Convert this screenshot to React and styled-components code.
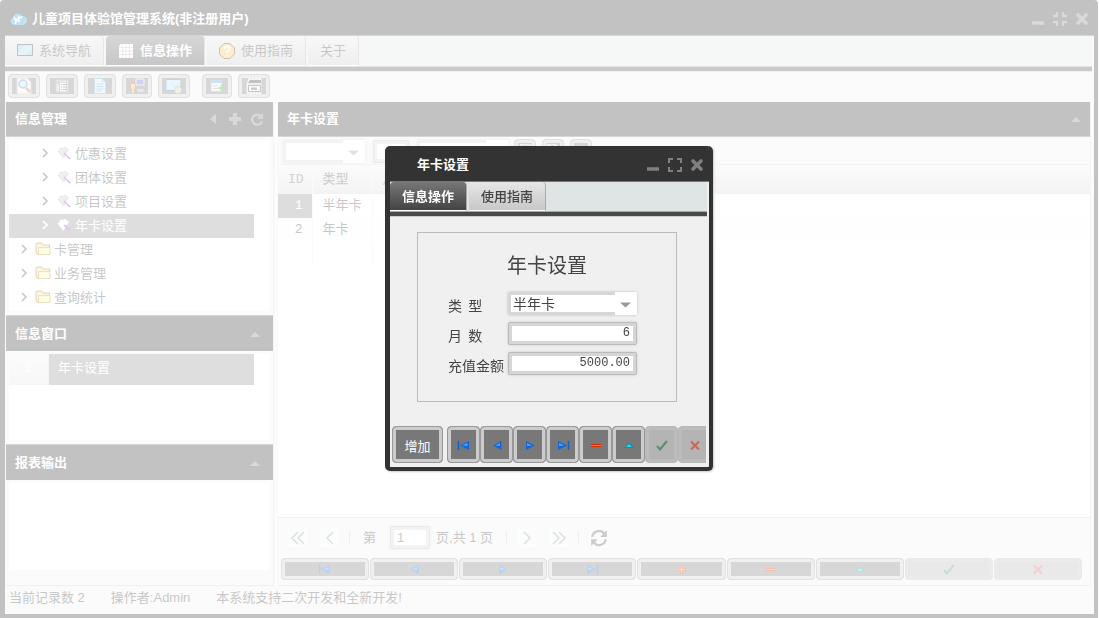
import React from 'react'
import styled, { createGlobalStyle, css } from 'styled-components'

const sans = `"Noto Sans CJK SC", "Liberation Sans", sans-serif`
const ui = `"Liberation Sans", "Noto Sans CJK SC", sans-serif`
const mono = `"Liberation Mono", "Noto Sans CJK SC", monospace`

const GlobalStyle = createGlobalStyle`
  * {
    box-sizing: border-box;
  }
  body {
    margin: 0;
    background: #f0f0f0;
    font: 13px/18px ${ui};
    color: #444;
  }
  button, input, select {
    margin: 0;
    font: inherit;
    color: inherit;
  }
`

// Window frame

const Frame = styled.div`
  display: flex;
  flex-direction: column;
  min-height: 100vh;
  margin-right: 1px;
  border: solid #333;
  border-width: 0 4px 4px 5px;
  border-radius: 4px 4px 0 0;
  background: #f0f0f0;
`

const TitleBar = styled.header`
  display: flex;
  align-items: center;
  height: 36px;
  padding: ${p => (p.$dialog ? '3px 4px 0 27px' : '3px 4px 0 5px')};
  border-bottom: 1px solid #777;
  background: #333;
`

const WindowTitle = styled.h1`
  flex: 1;
  margin: 0 0 0 ${p => (p.$dialog ? 0 : 5)}px;
  font: bold 13px/18px ${ui};
  color: #fff;
`

const Controls = styled.div`
  display: flex;
  gap: 6px;
`

const ControlButton = styled.button`
  display: flex;
  width: 16px;
  height: 16px;
  padding: 0;
  border: 0;
  background: none;
  color: #808080;
`

const TabStrip = styled.nav`
  display: flex;
  gap: 2px;
  height: ${p => (p.$dialog ? 30 : 31)}px;
  margin-right: 2px;
  background: #dfe5e4;
  border-bottom: 1px solid #aaa;
`

const Band = styled.div`
  height: 5px;
  margin-right: 2px;
  border-bottom: 1px solid #ccc;
  background: #4a4a4a;
`

const Tab = styled.button`
  display: flex;
  align-items: center;
  gap: 6px;
  padding: 0 12px;
  border: 0;
  border-right: 1px solid #aaa;
  border-bottom: 1px solid #fff;
  border-radius: 4px 4px 0 0;
  background: linear-gradient(#e6e6e6, #c8c8c8);
  white-space: nowrap;
  ${p => p.$dialog && css`
    padding-top: 2px;
    font-weight: 500;
  `}
  ${p => p.$active && css`
    background: linear-gradient(#777, #444);
    color: #fff;
    font-weight: bold;
  `}
`

// Toolbar

const Toolbar = styled.div`
  display: flex;
  align-items: flex-start;
  gap: 12px;
  height: 30px;
  padding: 2px 3px;
`

const ToolGroup = styled.div`
  display: flex;
  gap: 6px;
`

const key = css`
  display: flex;
  align-items: center;
  justify-content: center;
  border: 1px solid #999;
  border-radius: 4px;
  background: #787878;
  box-shadow: inset 0 0 0 3px #ccc;
`

const ToolButton = styled.button`
  ${key}
  width: ${p => (p.$narrow ? 30 : 32)}px;
  height: 24px;
  padding: 0;
  ${p => p.$small && css`
    width: 22px;
  `}
`

const NavButton = styled.button`
  ${key}
  flex: ${p => (p.$dialog ? '0 0 33px' : 1)};
  height: ${p => (p.$dialog ? 37 : 22)}px;
  padding: ${p => (p.$dialog ? 2 : 0)}px 0 0;
  ${p => p.$wide && css`
    flex-basis: 51px;
    padding-top: 5px;
    color: #fff;
    margin-right: 4px;
  `}
  &:disabled {
    border-color: #b8b8b8;
    background: #b4b4b4;
    box-shadow: inset 0 0 0 3px #bcbcbc;
  }
  &:disabled svg {
    opacity: 0.6;
  }
`

// Panels

const Main = styled.main`
  flex: 1;
  display: flex;
  gap: 4px;
  padding: 0 3px 0 1px;
`

const Sidebar = styled.aside`
  display: flex;
  flex-direction: column;
  width: 268px;
  border-right: 1px solid #ddd;
  border-bottom: 1px solid #ccc;
`

const Content = styled.section`
  flex: 1;
  min-width: 0;
  display: flex;
  flex-direction: column;
  border-right: 1px solid #ddd;
  border-bottom: 1px solid #ccc;
`

const PanelHead = styled.header`
  display: flex;
  align-items: center;
  gap: 6px;
  height: ${p => (p.$stacked ? 36 : 35)}px;
  padding: 0 ${p => (p.$stacked ? 12 : 8)}px 0 9px;
  border: solid #777;
  border-width: ${p => (p.$stacked ? '1px 0 0' : '0 0 1px')};
  background: #333;
`

const PanelTitle = styled.h2`
  flex: 1;
  margin: 0;
  font: bold 13px/18px ${ui};
  color: #fff;
`

const PanelBody = styled.div`
  display: flex;
  flex-direction: column;
  flex: ${p => (p.$grow ? 1 : 'none')};
  padding: 3px 4px ${p => (p.$grow ? 15 : 4)}px 3px;
`

const Well = styled.div`
  flex: 1;
  min-height: 86px;
  padding-right: 15px;
  background: #fff;
`

const Tree = styled.ul`
  margin: 0;
  padding: 2px 0 1px;
  list-style: none;
`

const TreeItem = styled.li`
  display: flex;
  align-items: center;
  gap: ${p => (p.$leaf ? 4 : 3)}px;
  height: 24px;
  padding-left: ${p => (p.$leaf ? 30 : 9)}px;
  ${p => p.$selected && css`
    background: #929292;
    color: #fff;
  `}
  > svg:first-child {
    margin-right: 2px;
  }
  > svg {
    margin-bottom: 3px;
  }
`

const OpenWindow = styled.button`
  display: flex;
  width: 100%;
  height: 31px;
  padding: 0;
  border: 0;
  background: #929292;
  color: #fff;
  line-height: 28px;
  text-align: left;
`

const OpenNumber = styled.span`
  width: 40px;
  height: 31px;
  margin-right: 9px;
  border-right: 1px solid #ddd;
  background: linear-gradient(#f4f4f4, #e4e4e4);
  text-align: center;
`

// Grid

const Filters = styled.div`
  display: flex;
  gap: 8px;
  height: 28px;
  padding: 3px 5px;
  border-bottom: 1px solid #ddd;
`

const FilterTools = styled.div`
  display: flex;
  gap: 6px;
  margin: -1px 0 0 -2px;
`

const GridArea = styled.div`
  flex: 1;
  background: #fff;
`

const Grid = styled.table`
  width: 100%;
  border-collapse: collapse;
  table-layout: fixed;
  font-family: ${mono};
  thead {
    background: linear-gradient(#f2f2f2, #d8d8d8);
    color: #666;
  }
  th {
    height: 29px;
    font-weight: 500;
  }
  td {
    height: 24px;
  }
  th, td {
    padding: 0 9px 0 10px;
    border-right: 1px solid #eee;
    text-align: left;
    white-space: nowrap;
  }
  th:last-child, td:last-child {
    border: 0;
  }
  td:first-child {
    text-align: right;
  }
  tbody tr:nth-child(even) td {
    background: #fafafa;
  }
  td.current {
    background: #8c8c8c;
    color: #fff;
  }
`

const Pager = styled.div`
  display: flex;
  align-items: center;
  gap: 9px;
  height: 41px;
  padding: 0 8px 1px;
  border-top: 1px solid #ccc;
`

const PagerButton = styled.button`
  display: flex;
  align-items: center;
  justify-content: center;
  width: 23px;
  height: 23px;
  padding: 0;
  border: 1px solid #e6e6e6;
  border-radius: 3px;
  background: #f2f4f4;
  color: ${p => (p.$strong ? '#555' : '#999')};
`

const Divider = styled.span`
  width: 1px;
  height: 14px;
  margin: 0 -1px;
  background: #ccc;
`

const PageLabel = styled.label`
  display: flex;
  align-items: center;
  gap: 14px;
  margin: 0 -3px 0 5px;
`

const PageTotal = styled.span`
  margin-right: 5px;
`

const NavBar = styled.div`
  display: flex;
  gap: ${p => (p.$dialog ? 0 : 1)}px;
  padding: ${p => (p.$dialog ? '0 0 4px' : '0 8px 5px 3px')};
  ${p => p.$dialog && css`
    margin: 24px 3px 0 2px;
    overflow: hidden;
  `}
`

const StatusBar = styled.footer`
  display: flex;
  gap: 26px;
  height: 28px;
  padding: 0 4px;
  line-height: 24px;
`

// Form fields

const TextInput = styled.input`
  width: ${p => p.$width}px;
  height: 23px;
  padding: 0 3px;
  border: 4px solid #d6d6d6;
  border-radius: 2px;
  outline: 1px solid #bbb;
  outline-offset: -1px;
  background: #fff;
  font: ${p => (p.$number ? `12px/15px ${mono}` : `13px/15px ${ui}`)};
  text-align: ${p => (p.$number ? 'right' : 'left')};
  box-shadow: 0 0 3px #ccc;
`

const SelectBox = styled.span`
  position: relative;
  display: flex;
  width: ${p => p.$width}px;
  height: 23px;
  border-radius: 2px;
  box-shadow: 0 0 3px #bbb;
  svg {
    position: absolute;
    right: 0;
    top: 0;
    width: 22px;
    height: 23px;
    background: #fff;
    pointer-events: none;
  }
`

const NativeSelect = styled.select`
  appearance: none;
  width: 100%;
  padding: 0 2px;
  border: 3px solid #d6d6d6;
  border-radius: 2px;
  background: #fff;
  font: 14px/16px ${sans};
`

// Dialog

const Mask = styled.div`
  position: fixed;
  inset: 0;
  display: grid;
  place-items: center;
  padding: 0 1px 2px 0;
  background: rgba(255, 255, 255, 0.7);
`

const Dialog = styled.section`
  width: 328px;
  border: solid #333;
  border-width: 0 4px 4px 5px;
  border-radius: 5px;
  background: #f0f0f0;
  overflow: hidden;
  box-shadow: 1px 1px 2px #ccc;
`

const Form = styled.form`
  margin: 15px 32px 0 27px;
  padding: 16px 30px 19px;
  border: 1px solid #bbb;
`

const FormTitle = styled.h2`
  margin: 0 0 11px;
  font: 20px/32px ${sans};
  text-align: center;
`

const Field = styled.div`
  display: flex;
  height: 30px;
  gap: 4px;
  label {
    width: 56px;
    font: 14px/27px ${sans};
    white-space: pre;
  }
  input, ${SelectBox} {
    flex: none;
  }
`

// Icons

const Svg = ({ size = 16, children, ...rest }) => (
  <svg width={size} height={size} viewBox="0 0 16 16" fill="none" aria-hidden="true" {...rest}>
    {children}
  </svg>
)

const navShapes = {
  first: (
    <>
      <path d="M2.500 4v9" stroke="#0b63d8" strokeWidth="1.500" />
      <path d="M13 4v9L4 8.500z" fill="#1066d8" />
      <path d="M11.500 6v3L6 8.500z" fill="#4aa4ff" />
    </>
  ),
  prev: (
    <>
      <path d="M12.500 4v9L4 8.500z" fill="#1066d8" />
      <path d="M11 6v3L6 8.500z" fill="#4aa4ff" />
    </>
  ),
  next: (
    <>
      <path d="M4 4v9l8.500-4.500z" fill="#1066d8" />
      <path d="M5 6v3l5.500-.5z" fill="#4aa4ff" />
    </>
  ),
  last: (
    <>
      <path d="M13.500 4v9" stroke="#0b63d8" strokeWidth="1.500" />
      <path d="M3 4v9l9-4.500z" fill="#1066d8" />
      <path d="M4 6v3l5.500-.5z" fill="#4aa4ff" />
    </>
  ),
  add: (
    <>
      <path d="M8.500 4v9M4 8.500h9" stroke="#d83808" strokeWidth="3" />
      <path d="M8.500 5v7M5 8.500h7" stroke="#ff8a50" />
    </>
  ),
  remove: (
    <>
      <path d="M3 8.500h10" stroke="#d42a00" strokeWidth="3" />
      <path d="M3 8.500h10" stroke="#ff7a3c" />
    </>
  ),
  edit: (
    <>
      <path d="M3 11h10.500L8 5.500z" fill="#0c90a8" />
      <path d="M5 10h6L8 7z" fill="#30d4e4" />
    </>
  ),
  save: <path d="M3 9l3 3.500L13 4" stroke="#157a3a" strokeWidth="2" />,
  cancel: <path d="M4 4.500l8 8M12 4.500l-8 8" stroke="#e0301a" strokeWidth="2" />,
}

const NavIcon = ({ name }) => <Svg>{navShapes[name]}</Svg>

const toolShapes = {
  search: (
    <>
      <path d="M1 0h10l4 4v12H1z" fill="#f4f4f4" stroke="#aaa" />
      <circle cx="7" cy="6" r="4" fill="#bfe6fb" stroke="#4a90c0" strokeWidth="1.500" />
      <path d="M10 10l4 4" stroke="#d8642a" strokeWidth="2.500" />
    </>
  ),
  list: (
    <>
      <path d="M2 2h12v12H2z" fill="#ccc" stroke="#999" />
      <path d="M2.500 3h3v3h-3z" fill="#5aa4dc" />
      <path d="M5.500 4h7v10h-7z" fill="#eee" stroke="#888" />
      <path d="M7 6.500h1M9 6.500h3M7 9h1M9 9h3M7 11.500h1M9 11.500h3" stroke="#555" />
    </>
  ),
  page: (
    <>
      <path d="M2.500.5h8l3 3v12h-11z" fill="#d4ecfa" stroke="#6aa6cc" />
      <path d="M10.500.5v3h3M4.500 6h7M4.500 8.500h7M4.500 11h7M4.500 13h5" stroke="#5f9cc4" />
    </>
  ),
  user: (
    <>
      <path d="M7 1h8v6H7z" fill="#6a68e0" stroke="#ddd" />
      <path d="M8 11h7v3H8z" fill="#ccc" stroke="#888" />
      <circle cx="4" cy="3" r="2" fill="#a86a2c" />
      <path d="M1.500 5.500h5v5h-1v5h-3v-5h-1z" fill="#f0b850" stroke="#a0702c" />
    </>
  ),
  screen: (
    <>
      <path d="M0 1.500h15v11H0z" fill="#b8e2f8" stroke="#3a6f90" />
      <circle cx="12" cy="12" r="3.500" fill="#d8d88a" stroke="#b070c0" />
    </>
  ),
  export: (
    <>
      <path d="M2 2.500h11v11H2z" fill="#eee" stroke="#999" />
      <path d="M2 2h11v3H2z" fill="#5aa2d4" />
      <path d="M4 8h5M4 10.500h5" stroke="#999" />
      <path d="M12.500 7v6M9.500 10h6" stroke="#36a836" strokeWidth="2" />
    </>
  ),
  print: (
    <>
      <path d="M3 .5h12v15H1V6z" fill="#ccc" stroke="#fff" strokeDasharray="2 1" />
      <path d="M4 2h11v3H2z" fill="#333" />
      <path d="M2.500 7.500h12v6h-12z" fill="#eee" stroke="#444" />
      <path d="M5 9.500h6v2.500H5z" fill="#555" />
    </>
  ),
  globe: (
    <>
      <circle cx="8" cy="8" r="6" fill="#8ac86a" stroke="#4a8a3a" />
      <path d="M4 6l4 2 4-3" stroke="#fff" />
    </>
  ),
}

const ToolIcon = ({ name, size }) => <Svg size={size}>{toolShapes[name]}</Svg>

const Logo = () => (
  <svg width="17" height="14" viewBox="0 0 17 14" aria-hidden="true">
    <path d="M4 13a4 4 0 0 1-1-7.500A5 5 0 0 1 12 4a4.500 4.500 0 0 1 1 9z" fill="#3a9ad8" />
    <path d="M4 5l2 4M9 4l-4 8M9 5v5M9 6l3-1" stroke="#fff" strokeWidth="1.600" fill="none" />
  </svg>
)

const NavigatorIcon = () => (
  <Svg>
    <path d="M.5 1.500h15v11H.5z" fill="#8ccbe8" stroke="#333" />
    <path d="M1 10L9 2h6v4l-6 6H1z" fill="#fff" opacity=".3" />
  </Svg>
)

const GridIcon = () => (
  <Svg>
    <path d="M3 1h12v14H1V3z" fill="#fff" />
    <path d="M4.500 1v14M8 1v14M11.500 1v14M1 4.500h14M1 8h14M1 11.500h14" stroke="#aaa" strokeWidth=".7" />
  </Svg>
)

const HelpIcon = () => (
  <Svg>
    <path d="M5 .5h6L15.500 5v6L11 15.500H5L.5 11V5z" fill="#f8ca52" stroke="#5a3010" />
    <path d="M5.500 6a2.500 2.500 0 1 1 3.500 2.200Q8 8.700 8 10M8 11.500v1.500" stroke="#fff" strokeWidth="1.600" />
  </Svg>
)

const Chevron = () => (
  <Svg size={12} viewBox="0 0 12 12">
    <path d="M4 2l4 4-4 4" stroke="currentColor" strokeWidth="1.600" />
  </Svg>
)

const FolderIcon = () => (
  <Svg>
    <path d="M1 12V3.500Q1 2 2.500 2h4L8 4h6.500v9.500H2z" fill="#f6df8c" stroke="#8a6a1c" />
    <path d="M3.500 13.500v-7h11.500v7z" fill="#fff0a8" stroke="#b8983c" />
  </Svg>
)

const GearIcon = ({ light }) => (
  <Svg size={14}>
    <path
      d="M1 6l2-1 1-3 3 1 2-2 2 2 2 1-1 3-4 1 1 4-2 2-2-3z"
      fill={light ? '#fff' : '#c8c8c8'}
      stroke={light ? '#fff' : '#999'}
      strokeDasharray={light ? undefined : '2 1'}
    />
    <path d="M8 8l7 7" stroke="#9a3cdc" strokeWidth="2" />
  </Svg>
)

const ArrowUp = () => (
  <Svg size={12} viewBox="0 0 12 12">
    <path d="M1 9l5-5 5 5z" fill="#808080" />
  </Svg>
)

const MinimizeIcon = () => (
  <Svg>
    <path d="M2 12h12" stroke="currentColor" strokeWidth="3.600" />
  </Svg>
)

const CloseIcon = () => (
  <Svg>
    <path d="M4 4l8 8M12 4l-8 8" stroke="currentColor" strokeWidth="3.600" strokeLinecap="round" />
  </Svg>
)

const ShrinkIcon = () => (
  <Svg>
    <path d="M1 5h4V1M15 5h-4V1M1 11h4v4M15 11h-4v4" stroke="currentColor" strokeWidth="2.400" />
  </Svg>
)

const ExpandIcon = () => (
  <Svg>
    <path d="M2 6V2h4M10 2h4v4M2 10v4h4M10 14h4v-4" stroke="currentColor" strokeWidth="2" />
  </Svg>
)

const PagerIcon = ({ d }) => (
  <Svg>
    <path d={d} stroke="currentColor" strokeWidth="1.600" />
  </Svg>
)

// Data

const leaves = ['优惠设置', '团体设置', '项目设置', '年卡设置']
const folders = ['卡管理', '业务管理', '查询统计']
const rows = [
  { id: 1, type: '半年卡' },
  { id: 2, type: '年卡' },
]

const navButtons = [
  ['first', '首记录'],
  ['prev', '上一条'],
  ['next', '下一条'],
  ['last', '末记录'],
  ['add', '增加'],
  ['remove', '删除'],
  ['edit', '编辑'],
  ['save', '保存'],
  ['cancel', '取消'],
]

const NavButtons = ({ dialog }) =>
  navButtons
    .filter(([name]) => !dialog || name !== 'add')
    .map(([name, label]) => (
      <NavButton
        key={name}
        type="button"
        aria-label={label}
        $dialog={dialog}
        disabled={name === 'save' || name === 'cancel'}
      >
        <NavIcon name={name} />
      </NavButton>
    ))

const Select = ({ width, children, ...rest }) => (
  <SelectBox $width={width}>
    <NativeSelect {...rest}>{children}</NativeSelect>
    <svg viewBox="0 0 22 22" aria-hidden="true">
      <path d="M5 10h11l-5.500 5z" fill="#999" />
    </svg>
  </SelectBox>
)

const WindowControls = ({ dialog }) => (
  <Controls>
    <ControlButton aria-label="最小化">
      <MinimizeIcon />
    </ControlButton>
    <ControlButton aria-label="最大化">{dialog ? <ExpandIcon /> : <ShrinkIcon />}</ControlButton>
    <ControlButton aria-label="关闭">
      <CloseIcon />
    </ControlButton>
  </Controls>
)

const CardSidebar = () => (
  <Sidebar>
    <PanelHead>
      <PanelTitle>信息管理</PanelTitle>
      <ControlButton aria-label="收起">
        <Svg>
          <path d="M11 3v10L5 8z" fill="currentColor" />
        </Svg>
      </ControlButton>
      <ControlButton aria-label="添加">
        <Svg>
          <path d="M8 2v12M2 8h12" stroke="currentColor" strokeWidth="4" />
        </Svg>
      </ControlButton>
      <ControlButton aria-label="刷新">
        <Svg>
          <path d="M12 5.500A5 5 0 1 0 13 10" stroke="currentColor" strokeWidth="2.400" />
          <path d="M14 2v6H8z" fill="currentColor" />
        </Svg>
      </ControlButton>
    </PanelHead>
    <PanelBody>
      <Well>
        <Tree>
          {leaves.map((name, i) => (
            <TreeItem key={name} $leaf $selected={i === 3}>
              <Chevron />
              <GearIcon light={i === 3} />
              {name}
            </TreeItem>
          ))}
          {folders.map(name => (
            <TreeItem key={name}>
              <Chevron />
              <FolderIcon />
              {name}
            </TreeItem>
          ))}
        </Tree>
      </Well>
    </PanelBody>
    <PanelHead $stacked>
      <PanelTitle>信息窗口</PanelTitle>
      <ArrowUp />
    </PanelHead>
    <PanelBody>
      <Well>
        <OpenWindow>
          <OpenNumber>1</OpenNumber>
          年卡设置
        </OpenWindow>
      </Well>
    </PanelBody>
    <PanelHead $stacked>
      <PanelTitle>报表输出</PanelTitle>
      <ArrowUp />
    </PanelHead>
    <PanelBody $grow>
      <Well />
    </PanelBody>
  </Sidebar>
)

const CardList = () => (
  <Content>
    <PanelHead>
      <PanelTitle>年卡设置</PanelTitle>
      <ArrowUp />
    </PanelHead>
    <Filters>
      <Select width={82} aria-label="字段" />
      <TextInput $width={36} aria-label="条件" />
      <Select width={91} aria-label="值" />
      <FilterTools>
        <ToolButton $small aria-label="列表">
          <ToolIcon name="print" size={14} />
        </ToolButton>
        <ToolButton $small aria-label="查询">
          <ToolIcon name="search" size={14} />
        </ToolButton>
        <ToolButton $small aria-label="全部">
          <ToolIcon name="globe" size={14} />
        </ToolButton>
      </FilterTools>
    </Filters>
    <GridArea>
      <Grid>
        <colgroup>
          <col width="34" />
          <col width="60" />
          <col />
        </colgroup>
        <thead>
          <tr>
            <th>ID</th>
            <th>类型</th>
            <th>月数</th>
          </tr>
        </thead>
        <tbody>
          {rows.map(row => (
            <tr key={row.id}>
              <td className={row.id === 1 ? 'current' : undefined}>{row.id}</td>
              <td>{row.type}</td>
              <td />
            </tr>
          ))}
          <tr>
            <td />
            <td />
            <td />
          </tr>
        </tbody>
      </Grid>
    </GridArea>
    <Pager>
      <PagerButton aria-label="第一页">
        <PagerIcon d="M8 2L2 8l6 6M14 2L8 8l6 6" />
      </PagerButton>
      <PagerButton aria-label="上一页">
        <PagerIcon d="M11 2L5 8l6 6" />
      </PagerButton>
      <Divider />
      <PageLabel>
        第
        <TextInput $width={40} defaultValue="1" />
      </PageLabel>
      <PageTotal>页,共 1 页</PageTotal>
      <Divider />
      <PagerButton aria-label="下一页">
        <PagerIcon d="M5 2l6 6-6 6" />
      </PagerButton>
      <PagerButton aria-label="最后一页">
        <PagerIcon d="M2 2l6 6-6 6M8 2l6 6-6 6" />
      </PagerButton>
      <Divider />
      <PagerButton $strong aria-label="刷新">
        <Svg size={18}>
          <path d="M2 7a6 6 0 0 1 11-2.500M14 9a6 6 0 0 1-11 2.500" stroke="currentColor" strokeWidth="2" />
          <path d="M15 1v6H9zM1 15V9h6z" fill="currentColor" />
        </Svg>
      </PagerButton>
    </Pager>
    <NavBar>
      <NavButtons />
    </NavBar>
  </Content>
)

const CardDialog = () => (
  <Dialog role="dialog" aria-labelledby="dialog-title">
    <TitleBar $dialog>
      <WindowTitle as="h2" id="dialog-title" $dialog>
        年卡设置
      </WindowTitle>
      <WindowControls dialog />
    </TitleBar>
    <TabStrip $dialog>
      <Tab $dialog $active>
        信息操作
      </Tab>
      <Tab $dialog>使用指南</Tab>
    </TabStrip>
    <Band />
    <Form>
      <FormTitle>年卡设置</FormTitle>
      <Field>
        <label htmlFor="card-type">类{'  '}型</label>
        <Select id="card-type" width={129} defaultValue="半年卡">
          <option>半年卡</option>
          <option>年卡</option>
        </Select>
      </Field>
      <Field>
        <label htmlFor="card-months">月{'  '}数</label>
        <TextInput id="card-months" $width={129} $number defaultValue="6" />
      </Field>
      <Field>
        <label htmlFor="card-amount">充值金额</label>
        <TextInput id="card-amount" $width={129} $number defaultValue="5000.00" />
      </Field>
    </Form>
    <NavBar $dialog>
      <NavButton type="button" $dialog $wide>
        增加
      </NavButton>
      <NavButtons dialog />
    </NavBar>
  </Dialog>
)

const App = () => (
  <>
    <GlobalStyle />
    <Frame>
      <TitleBar>
        <Logo />
        <WindowTitle>儿童项目体验馆管理系统(非注册用户)</WindowTitle>
        <WindowControls />
      </TitleBar>
      <TabStrip>
        <Tab>
          <NavigatorIcon />
          系统导航
        </Tab>
        <Tab $active>
          <GridIcon />
          信息操作
        </Tab>
        <Tab>
          <HelpIcon />
          使用指南
        </Tab>
        <Tab>关于</Tab>
      </TabStrip>
      <Band />
      <Toolbar>
        <ToolGroup>
          <ToolButton aria-label="查询">
            <ToolIcon name="search" />
          </ToolButton>
          <ToolButton aria-label="列表">
            <ToolIcon name="list" />
          </ToolButton>
          <ToolButton aria-label="文档">
            <ToolIcon name="page" />
          </ToolButton>
          <ToolButton $narrow aria-label="用户">
            <ToolIcon name="user" />
          </ToolButton>
          <ToolButton aria-label="屏幕">
            <ToolIcon name="screen" />
          </ToolButton>
        </ToolGroup>
        <ToolGroup>
          <ToolButton $narrow aria-label="导出">
            <ToolIcon name="export" />
          </ToolButton>
          <ToolButton aria-label="打印">
            <ToolIcon name="print" />
          </ToolButton>
        </ToolGroup>
      </Toolbar>
      <Main>
        <CardSidebar />
        <CardList />
      </Main>
      <StatusBar>
        <span>当前记录数 2</span>
        <span>操作者:Admin</span>
        <span>本系统支持二次开发和全新开发!</span>
      </StatusBar>
    </Frame>
    <Mask>
      <CardDialog />
    </Mask>
  </>
)

export default App
